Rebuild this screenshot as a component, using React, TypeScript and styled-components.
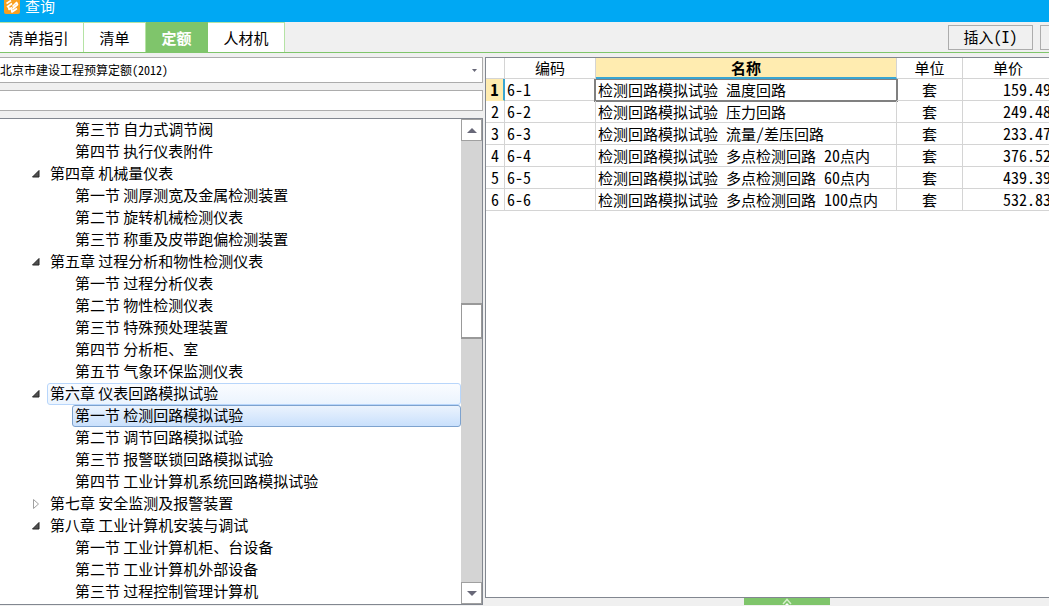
import React from "react";
import styled, { createGlobalStyle, css } from "styled-components";

const sans = `"Noto Sans CJK SC", "Liberation Sans", sans-serif`;
const line = "#828790";
const green = "#7fc56b";
const cream = "#ffecb0";
const blue = "#39a5d2";

const GlobalStyle = createGlobalStyle`
  * { box-sizing: border-box; }
  body { margin: 0; font: 15px/20px ${sans}; color: #000; background: #f0f0f0; }
  button, input, select { font: inherit; color: inherit; }
`;

const Window = styled.div`
  display: flex;
  flex-direction: column;
  height: 100vh;
  overflow: hidden;
`;

const TitleBar = styled.header`
  display: flex;
  align-items: flex-start;
  gap: 5px;
  height: 22px;
  padding-left: 4px;
  background: #00a8f3;
  color: #fff;
  line-height: 12px;
  flex: none;
`;

const Toolbar = styled.div`
  display: flex;
  justify-content: space-between;
  height: 31px;
  flex: none;
  border-bottom: 1px solid ${green};
`;

const Tabs = styled.nav`
  display: flex;
`;

const Tab = styled.button<{ $width: number; $active?: boolean }>`
  width: ${(p) => p.$width}px;
  padding: 1px 0 0;
  border: solid #b5e3a4;
  border-width: 1px 1px 0 0;
  background: #fff;
  &:first-child {
    padding-right: 6px;
  }
  ${(p) =>
    p.$active &&
    css`
      background: ${green};
      border-color: ${green};
      color: #fff;
      font-weight: bold;
    `}
`;

const Actions = styled.div`
  display: flex;
  gap: 7px;
  padding-top: 3px;
`;

const ActionButton = styled.button<{ $cut?: boolean }>`
  width: ${(p) => (p.$cut ? 9 : 85)}px;
  height: 25px;
  padding: 0 0 2px;
  border: 1px solid #acacac;
  border-right-width: ${(p) => (p.$cut ? 0 : 1)}px;
  background: #f0f0f0;
`;

const Half = styled.span`
  font-size: 16px;
  line-height: 16px;
  font-feature-settings: "hwid";
  white-space: pre;
`;

const Panes = styled.main`
  display: flex;
  flex: 1;
  gap: 2px;
  min-height: 0;
  padding-top: 4px;
`;

const LeftPane = styled.section`
  display: flex;
  flex-direction: column;
  flex: 0 0 483px;
  padding-bottom: 1px;
`;

const Picker = styled.div`
  display: flex;
  height: 26px;
  margin-bottom: 7px;
  border: 1px solid #acacac;
  border-left: 0;
  background: #fff;
  align-items: center;
  padding-right: 5px;
`;

const PickerSelect = styled.select`
  flex: 1;
  height: 24px;
  padding: 0;
  border: 0;
  appearance: none;
  background: transparent;
  font-size: 12px;
  font-feature-settings: "hwid";
`;

const SearchInput = styled.input`
  height: 21px;
  margin-bottom: 7px;
  border: 1px solid #acacac;
  border-left: 0;
`;

const TreeBox = styled.div`
  display: flex;
  flex: 1;
  min-height: 0;
  border: 1px solid ${line};
  border-left: 0;
  background: #fff;
`;

const Tree = styled.ul`
  flex: 1;
  margin: 0;
  padding: 0;
  list-style: none;
  overflow: hidden;
`;

const TreeRow = styled.li<{ $child: boolean }>`
  display: flex;
  align-items: center;
  height: 22px;
  padding-left: ${(p) => (p.$child ? 72 : 31)}px;
`;

const Toggle = styled.svg`
  width: 10px;
  height: 12px;
  margin-right: 6px;
`;

const TreeLabel = styled.span<{ $state?: "parent" | "selected" }>`
  flex: 1;
  height: 22px;
  padding: 0 2px;
  border: 1px solid transparent;
  border-radius: 3px;
  line-height: 18px;
  white-space: nowrap;
  ${(p) =>
    p.$state === "parent" &&
    css`
      border-color: #b8d6fb;
      background: linear-gradient(#fafcff, #ebf4fe);
    `}
  ${(p) =>
    p.$state === "selected" &&
    css`
      border-color: #7da2ce;
      background: linear-gradient(#ebf3fd, #c9e0fc);
    `}
`;

const ScrollBar = styled.div`
  display: flex;
  flex-direction: column;
  width: 21px;
  background: #d4d4d4;
`;

const ScrollButton = styled.button`
  display: grid;
  place-items: center;
  height: 22px;
  padding: 0;
  border: 1px solid #a0a0a0;
  background: #fff;
`;

const Track = styled.div<{ $grow: number }>`
  flex: ${(p) => p.$grow} 0 0;
`;

const Thumb = styled.div`
  height: 36px;
  border: 1px solid #999;
  border-width: 2px 1px;
  background: #fff;
`;

const RightPane = styled.section`
  display: flex;
  flex-direction: column;
  flex: 1;
  min-width: 0;
`;

const GridBox = styled.div`
  flex: 1;
  overflow: hidden;
  border: solid ${line};
  border-width: 1px 0 1px 1px;
  background: #fff;
`;

const Grid = styled.table`
  width: calc(100% + 5px);
  table-layout: fixed;
  border-collapse: separate;
  border-spacing: 0;
`;

const Col = styled.col<{ $width?: number }>`
  width: ${(p) => (p.$width ? `${p.$width}px` : "auto")};
`;

const HeadCell = styled.th<{ $active?: boolean }>`
  height: 21px;
  padding: 0;
  border: solid #d4d4d4;
  border-width: 0 1px 1px 0;
  font-weight: normal;
  line-height: 20px;
  ${(p) =>
    p.$active &&
    css`
      background: ${cream};
      border-bottom: 2px solid ${blue};
      font-weight: bold;
      line-height: 19px;
    `}
`;

const Cell = styled.td<{ $align?: string; $focus?: boolean }>`
  position: relative;
  height: 22px;
  padding: 0 2px;
  border: solid #d4d4d4;
  border-width: 0 1px 1px 0;
  text-align: ${(p) => p.$align ?? "left"};
  white-space: nowrap;
  ${(p) =>
    p.$focus &&
    css`
      &::after {
        content: "";
        position: absolute;
        inset: 0 -2px -2px -2px;
        border: 2px solid #808080;
        border-top-width: 1px;
      }
    `}
`;

const RowHead = styled.th<{ $active: boolean }>`
  height: 22px;
  padding: 0;
  border: solid #d4d4d4;
  border-width: 0 1px 1px 0;
  font-weight: normal;
  ${(p) =>
    p.$active &&
    css`
      background: ${cream};
      border-right: 2px solid ${blue};
      border-bottom-color: ${cream};
      font-weight: bold;
    `}
`;

const Footer = styled.footer`
  height: 8px;
  flex: none;
`;

const Expander = styled.button`
  display: grid;
  place-items: center;
  width: 86px;
  height: 7px;
  margin-left: 46%;
  padding: 0;
  border: 0;
  background: ${green};
`;

type Node = { text: string; open?: boolean; state?: "parent" | "selected" };

const nodes: Node[] = [
  { text: "第三节 自力式调节阀" },
  { text: "第四节 执行仪表附件" },
  { text: "第四章 机械量仪表", open: true },
  { text: "第一节 测厚测宽及金属检测装置" },
  { text: "第二节 旋转机械检测仪表" },
  { text: "第三节 称重及皮带跑偏检测装置" },
  { text: "第五章 过程分析和物性检测仪表", open: true },
  { text: "第一节 过程分析仪表" },
  { text: "第二节 物性检测仪表" },
  { text: "第三节 特殊预处理装置" },
  { text: "第四节 分析柜、室" },
  { text: "第五节 气象环保监测仪表" },
  { text: "第六章 仪表回路模拟试验", open: true, state: "parent" },
  { text: "第一节 检测回路模拟试验", state: "selected" },
  { text: "第二节 调节回路模拟试验" },
  { text: "第三节 报警联锁回路模拟试验" },
  { text: "第四节 工业计算机系统回路模拟试验" },
  { text: "第七章 安全监测及报警装置", open: false },
  { text: "第八章 工业计算机安装与调试", open: true },
  { text: "第一节 工业计算机柜、台设备" },
  { text: "第二节 工业计算机外部设备" },
  { text: "第三节 过程控制管理计算机" },
];

const rows = [
  ["6-1", "检测回路模拟试验 温度回路", "套", "159.49"],
  ["6-2", "检测回路模拟试验 压力回路", "套", "249.48"],
  ["6-3", "检测回路模拟试验 流量/差压回路", "套", "233.47"],
  ["6-4", "检测回路模拟试验 多点检测回路 20点内", "套", "376.52"],
  ["6-5", "检测回路模拟试验 多点检测回路 60点内", "套", "439.39"],
  ["6-6", "检测回路模拟试验 多点检测回路 100点内", "套", "532.83"],
];

/* Sets the Latin runs of a string in half-width glyphs. */
function Mixed({ text }: { text: string }) {
  return (
    <>
      {text.split(/([\x20-\x7e]+)/).map((part, i) =>
        i % 2 ? <Half key={i}>{part}</Half> : part
      )}
    </>
  );
}

function Arrow({ up, small }: { up?: boolean; small?: boolean }) {
  return (
    <svg width={small ? 5 : 10} height={small ? 3 : 5} viewBox="0 0 10 5" preserveAspectRatio="none">
      <path d={up ? "M0 5L5 0L10 5Z" : "M0 0L5 5L10 0Z"} fill="#686878" />
    </svg>
  );
}

export default function App() {
  return (
    <Window>
      <GlobalStyle />
      <TitleBar>
        <svg width="16" height="14" viewBox="0 0 16 14">
          <path d="M0 0H16V12Q16 14 14 14H2Q0 14 0 12Z" fill="#f9a01e" />
          <path
            d="M2.500 3.500L7 0.500M3 7L8 3.500M4.500 5.500L5 9.500L8 7.500M8.500 6.500L12.500 2.500L13.500 4.500L8.500 9M7.500 9L8 12L13 8.500"
            fill="none"
            stroke="#fff"
            strokeWidth="1.700"
            strokeLinejoin="round"
          />
        </svg>
        <span>查询</span>
      </TitleBar>
      <Toolbar>
        <Tabs>
          <Tab $width={84}>清单指引</Tab>
          <Tab $width={62}>清单</Tab>
          <Tab $width={62} $active>定额</Tab>
          <Tab $width={77}>人材机</Tab>
        </Tabs>
        <Actions>
          <ActionButton><Mixed text="插入(I)" /></ActionButton>
          <ActionButton $cut />
        </Actions>
      </Toolbar>
      <Panes>
        <LeftPane>
          <Picker>
            <PickerSelect>
              <option>北京市建设工程预算定额(2012)</option>
            </PickerSelect>
            <Arrow small />
          </Picker>
          <SearchInput type="text" />
          <TreeBox>
            <Tree>
              {nodes.map((n) => (
                <TreeRow key={n.text} $child={n.open === undefined}>
                  {n.open !== undefined && (
                    <Toggle viewBox="0 0 10 12">
                      {n.open ? (
                        <path d="M8 2.500V9H1.500Z" fill="#505050" stroke="#262626" />
                      ) : (
                        <path d="M2.500 1.500V10.500L7.500 6Z" fill="#fff" stroke="#a0a0a0" />
                      )}
                    </Toggle>
                  )}
                  <TreeLabel $state={n.state}>{n.text}</TreeLabel>
                </TreeRow>
              ))}
            </Tree>
            <ScrollBar>
              <ScrollButton><Arrow up /></ScrollButton>
              <Track $grow={162} />
              <Thumb />
              <Track $grow={244} />
              <ScrollButton><Arrow /></ScrollButton>
            </ScrollBar>
          </TreeBox>
        </LeftPane>
        <RightPane>
          <GridBox>
            <Grid>
              <colgroup>
                <Col $width={19} />
                <Col $width={91} />
                <Col />
                <Col $width={66} />
                <Col $width={91} />
              </colgroup>
              <thead>
                <tr>
                  <HeadCell />
                  <HeadCell>编码</HeadCell>
                  <HeadCell $active>名称</HeadCell>
                  <HeadCell>单位</HeadCell>
                  <HeadCell>单价</HeadCell>
                </tr>
              </thead>
              <tbody>
                {rows.map(([code, name, unit, price], i) => (
                  <tr key={code}>
                    <RowHead scope="row" $active={i === 0}><Half>{i + 1}</Half></RowHead>
                    <Cell><Half>{code}</Half></Cell>
                    <Cell $focus={i === 0}><Mixed text={name} /></Cell>
                    <Cell $align="center">{unit}</Cell>
                    <Cell $align="right"><Half>{price}</Half></Cell>
                  </tr>
                ))}
              </tbody>
            </Grid>
          </GridBox>
          <Footer>
            <Expander>
              <svg width="10" height="7" viewBox="0 0 10 7">
                <path d="M1 6L5 1.500L9 6" fill="none" stroke="#d4efca" strokeWidth="1.500" />
                <path d="M3 7L5 5L7 7Z" fill="#fff" />
              </svg>
            </Expander>
          </Footer>
        </RightPane>
      </Panes>
    </Window>
  );
}
